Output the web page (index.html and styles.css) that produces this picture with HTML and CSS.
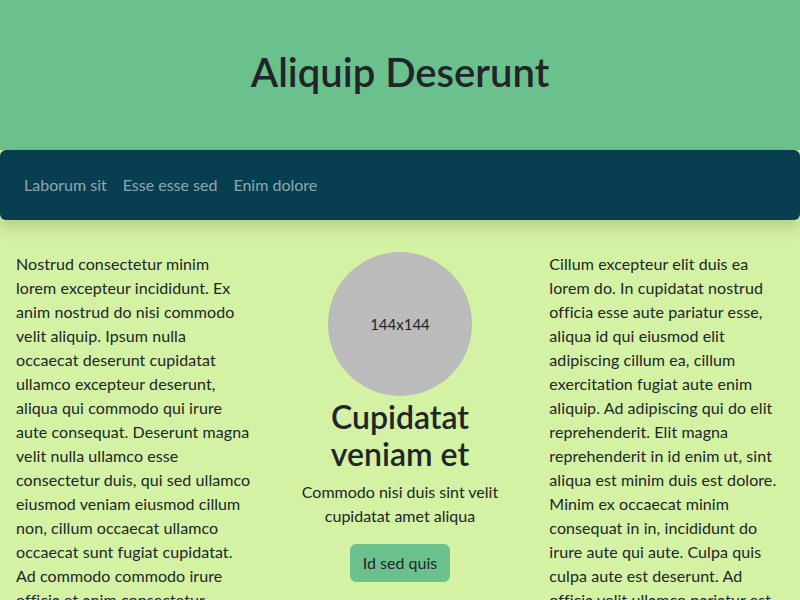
FILE: index.html
```html
<!DOCTYPE html>
<html lang="en">
<head>
<meta charset="utf-8">
<title>Aliquip Deserunt</title>
<link rel="stylesheet" href="styles.css">
</head>
<body>
<header class="hero">
  <h1 class="hero-title">Aliquip Deserunt</h1>
</header>
<nav class="navbar">
  <a class="nav-link" href="#">Laborum sit</a>
  <a class="nav-link" href="#">Esse esse sed</a>
  <a class="nav-link" href="#">Enim dolore</a>
</nav>
<main class="content">
  <section class="col">
    <p class="text">Nostrud consectetur minim lorem excepteur incididunt. Ex anim nostrud do nisi commodo velit aliquip. Ipsum nulla occaecat deserunt cupidatat ullamco excepteur deserunt, aliqua qui commodo qui irure aute consequat. Deserunt magna velit nulla ullamco esse consectetur duis, qui sed ullamco eiusmod veniam eiusmod cillum non, cillum occaecat ullamco occaecat sunt fugiat cupidatat. Ad commodo commodo irure officia et anim consectetur incididunt, aliqua sunt nostrud ea magna.</p>
  </section>
  <section class="col col-center">
    <div class="avatar">144x144</div>
    <h2 class="feature-title">Cupidatat veniam et</h2>
    <p class="feature-text">Commodo nisi duis sint velit cupidatat amet aliqua</p>
    <a class="btn" href="#">Id sed quis</a>
  </section>
  <section class="col">
    <p class="text">Cillum excepteur elit duis ea lorem do. In cupidatat nostrud officia esse aute pariatur esse, aliqua id qui eiusmod elit adipiscing cillum ea, cillum exercitation fugiat aute enim aliquip. Ad adipiscing qui do elit reprehenderit. Elit magna reprehenderit in id enim ut, sint aliqua est minim duis est dolore. Minim ex occaecat minim consequat in in, incididunt do irure aute qui aute. Culpa quis culpa aute est deserunt. Ad officia velit ullamco pariatur est sint, magna elit dolore.</p>
  </section>
</main>
</body>
</html>
```

FILE: styles.css
```css
* { box-sizing: border-box; }
html, body { margin: 0; padding: 0; }
body {
  font-family: "Lato", "Noto Sans", sans-serif;
  font-size: 16px;
  line-height: 1.5;
  color: #212529;
  background: #d4f2a3;
  overflow: hidden;
}
.hero {
  background: #6bc18d;
  height: 150px;
  padding-bottom: 6px;
  display: flex;
  align-items: center;
  justify-content: center;
}
.hero-title {
  margin: 0;
  font-size: 40px;
  font-weight: 600;
  line-height: 1.2;
}
.navbar {
  background: #073f51;
  height: 70px;
  padding: 0 16px;
  display: flex;
  align-items: center;
  border-radius: 6px;
  box-shadow: 0 8px 16px rgba(0, 0, 0, 0.15);
  position: relative;
}
.nav-link {
  color: rgba(255, 255, 255, 0.55);
  text-decoration: none;
  padding: 8px;
}
.content {
  display: grid;
  grid-template-columns: 1fr 1fr 1fr;
  padding-top: 32px;
}
.col { padding: 0 16px; }
.text { margin: 0; letter-spacing: 0.08px; }
.col-center {
  display: flex;
  flex-direction: column;
  align-items: center;
  text-align: center;
}
.avatar {
  width: 144px;
  height: 144px;
  border-radius: 50%;
  background: #bbbbbb;
  display: flex;
  align-items: center;
  justify-content: center;
  font-size: 15px;
  color: #212529;
}
.feature-title {
  margin: 3px 0 7px;
  font-size: 32px;
  font-weight: 600;
  line-height: 1.15;
}
.feature-text { margin: 0 0 16px; }
.btn {
  display: inline-block;
  background: #6bc18d;
  color: #212529;
  text-decoration: none;
  padding: 6px 12px;
  border: 1px solid #6bc18d;
  border-radius: 6px;
}
```
